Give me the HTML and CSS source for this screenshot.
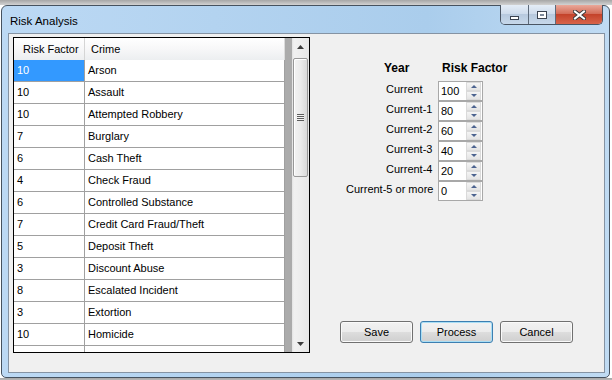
FILE: index.html
```html
<!DOCTYPE html>
<html lang="en">
<head>
	<meta charset="UTF-8">
	<title>Risk Analysis</title>
	<link rel="stylesheet" href="styles.css">
</head>
<body>
	<div class="window">
		<div class="titlebar">
			<span class="title">Risk Analysis</span>
			<div class="caps">
				<span class="cap min"><i></i></span>
				<span class="cap max"><i></i></span>
				<span class="cap close">
					<svg width="13" height="10" viewBox="0 0 13 10">
						<path d="M2 1.5 L11 8.5 M11 1.5 L2 8.5" stroke="#3b3b3b" stroke-width="4" stroke-linecap="square"/>
						<path d="M2 1.5 L11 8.5 M11 1.5 L2 8.5" stroke="#fff" stroke-width="2" stroke-linecap="square"/>
					</svg>
				</span>
			</div>
		</div>
		<div class="client">
			<div class="grid">
				<div class="grid-body">
					<div class="row head">
						<div class="cell c1">Risk Factor</div>
						<div class="cell c2">Crime</div>
					</div>
					<div class="row"><div class="cell c1 selected">10</div><div class="cell c2">Arson</div></div>
					<div class="row"><div class="cell c1">10</div><div class="cell c2">Assault</div></div>
					<div class="row"><div class="cell c1">10</div><div class="cell c2">Attempted Robbery</div></div>
					<div class="row"><div class="cell c1">7</div><div class="cell c2">Burglary</div></div>
					<div class="row"><div class="cell c1">6</div><div class="cell c2">Cash Theft</div></div>
					<div class="row"><div class="cell c1">4</div><div class="cell c2">Check Fraud</div></div>
					<div class="row"><div class="cell c1">6</div><div class="cell c2">Controlled Substance</div></div>
					<div class="row"><div class="cell c1">7</div><div class="cell c2">Credit Card Fraud/Theft</div></div>
					<div class="row"><div class="cell c1">5</div><div class="cell c2">Deposit Theft</div></div>
					<div class="row"><div class="cell c1">3</div><div class="cell c2">Discount Abuse</div></div>
					<div class="row"><div class="cell c1">8</div><div class="cell c2">Escalated Incident</div></div>
					<div class="row"><div class="cell c1">3</div><div class="cell c2">Extortion</div></div>
					<div class="row"><div class="cell c1">10</div><div class="cell c2">Homicide</div></div>
					<div class="row"><div class="cell c1"></div><div class="cell c2"></div></div>
				</div>
				<div class="vscroll">
					<div class="arrow">
						<svg width="7" height="4" viewBox="0 0 7 4"><path d="M0 4 L3.5 0 L7 4 Z" fill="#3c3c3c"/></svg>
					</div>
					<div class="track">
						<div class="thumb"><span class="grip"></span></div>
					</div>
					<div class="arrow">
						<svg width="7" height="4" viewBox="0 0 7 4"><path d="M0 0 L7 0 L3.5 4 Z" fill="#3c3c3c"/></svg>
					</div>
				</div>
			</div>
			<div class="side">
				<div class="years">
					<div class="hd hd-year">Year</div>
					<div class="hd hd-risk">Risk Factor</div>

					<div class="lbl">Current</div>
					<div class="num"><span>100</span><span class="spin"><b class="up"></b><b class="down"></b></span></div>
					<div class="lbl">Current-1</div>
					<div class="num"><span>80</span><span class="spin"><b class="up"></b><b class="down"></b></span></div>
					<div class="lbl">Current-2</div>
					<div class="num"><span>60</span><span class="spin"><b class="up"></b><b class="down"></b></span></div>
					<div class="lbl">Current-3</div>
					<div class="num"><span>40</span><span class="spin"><b class="up"></b><b class="down"></b></span></div>
					<div class="lbl">Current-4</div>
					<div class="num"><span>20</span><span class="spin"><b class="up"></b><b class="down"></b></span></div>
					<div class="lbl wide">Current-5 or more</div>
					<div class="num"><span>0</span><span class="spin"><b class="up"></b><b class="down"></b></span></div>
				</div>
				<div class="buttons">
					<button class="btn">Save</button>
					<button class="btn default">Process</button>
					<button class="btn">Cancel</button>
				</div>
			</div>
		</div>
	</div>
</body>
</html>
```

FILE: styles.css
```css
*{
	margin: 0;
	padding: 0;
	box-sizing: border-box;
}
body{
	background: linear-gradient(#a6a6a6, #d2d2d2 5px, #fff 5px);
	font: 11px "Liberation Sans", Arial, sans-serif;
	color: #000;
}
.window{
	margin: 5px 0 0 1px;
	width: 609px;
	height: 373px;
	border: 1px solid #46525f;
	border-radius: 6px 6px 5px 5px;
	background: linear-gradient(to right, #bcd9f4, #aacdec 70%, #c0dbf3);
	padding: 0 4px 4px 6px;
	display: flex;
	flex-direction: column;
}
.titlebar{
	height: 27px;
	display: flex;
	justify-content: space-between;
	align-items: flex-start;
}
.title{
	padding: 9px 0 0 2px;
	font-size: 11.5px;
}
/* caption buttons */
.caps{
	display: flex;
	margin: -1px 2px 0 0;
	height: 20px;
	border: 1px solid #4a5563;
	border-top: none;
	border-radius: 0 0 5px 5px;
	overflow: hidden;
}
.cap{
	display: flex;
	align-items: center;
	justify-content: center;
	height: 100%;
	background: linear-gradient(#e4edf7, #cfdcec 45%, #b7c9de 50%, #c7d8ea);
}
.cap + .cap{
	border-left: 1px solid #5d6a7a;
}
.min{
	width: 27px;
}
.max{
	width: 27px;
}
.close{
	width: 47px;
	background: linear-gradient(#e9a89a, #d46e5a 45%, #c4432b 50%, #d8644a);
}
.min i{
	display: block;
	width: 9px;
	height: 4px;
	margin-top: 6px;
	background: #fff;
	border: 1px solid #3b4350;
}
.max i{
	display: block;
	width: 10px;
	height: 8px;
	border: 1px solid #3b4350;
	box-shadow: inset 0 0 0 2px #fff;
	background: #7d8a9b;
}
.client{
	flex: 1;
	display: flex;
	padding: 3px 0 0 4px;
	border: 1px solid #8593a3;
	background: #f0f0f0;
}
/* data grid */
.grid{
	display: flex;
	width: 297px;
	height: 316px;
	border: 1px solid #000;
	background: #ababab;
}
.grid-body{
	width: 278px;
	overflow: hidden;
}
.row{
	display: flex;
	width: 271px;
	height: 22px;
	background: #fff;
}
.cell{
	height: 22px;
	line-height: 21px;
	padding-left: 3px;
	border-right: 1px solid #a0a0a0;
	border-bottom: 1px solid #a0a0a0;
	white-space: nowrap;
}
.c1{
	width: 71px;
}
.c2{
	width: 200px;
}
.head .cell{
	line-height: 22px;
	background: linear-gradient(#fff, #f7f7f8 50%, #eceef0);
	border-bottom: none;
	border-right: 1px solid #d5d5d5;
}
.head .c1{
	padding-left: 9px;
}
.head .c2{
	padding-left: 6px;
	border-right: 1px solid #dcdcdc;
}
.selected{
	background: #3399ff;
	color: #fff;
}
/* scrollbar */
.vscroll{
	width: 17px;
	display: flex;
	flex-direction: column;
	background: linear-gradient(to right, #e2e2e2, #f1f1f1 2px, #ececec 60%, #e6e6e6);
}
.arrow{
	height: 17px;
	display: flex;
	align-items: center;
	justify-content: center;
}
.track{
	flex: 1;
	padding-top: 3px;
}
.thumb{
	width: 15px;
	height: 119px;
	margin-left: 1px;
	border: 1px solid #989898;
	border-radius: 2px;
	background: linear-gradient(to right, #f3f3f3, #ebebeb 50%, #d9d9d9);
	box-shadow: inset 1px 1px 0 #fff;
	display: flex;
	align-items: center;
	justify-content: center;
}
.grip{
	display: block;
	width: 7px;
	height: 7px;
	background: repeating-linear-gradient(#5d5d5d 0, #5d5d5d 1px, #f4f4f4 1px, #f4f4f4 2px);
}
/* year table */
.side{
	flex: 1;
	display: flex;
	flex-direction: column;
	padding: 23px 0 29px 30px;
}
.years{
	display: grid;
	grid-template-columns: 98px 45px;
	grid-template-rows: 21px;
	grid-auto-rows: 20px;
}
.hd{
	font-weight: bold;
	font-size: 12px;
	line-height: 16px;
	white-space: nowrap;
}
.hd-year{
	padding-left: 44px;
}
.hd-risk{
	padding-left: 4px;
}
.lbl{
	padding: 1px 0 0 46px;
	line-height: 14px;
	white-space: nowrap;
}
.lbl.wide{
	padding-left: 6px;
}
.num{
	display: flex;
	justify-content: space-between;
	height: 20px;
	line-height: 18px;
	padding-left: 2px;
	border: 1px solid #a8a8a8;
	background: #fff;
}
.spin{
	display: flex;
	flex-direction: column;
	width: 15px;
	margin-right: 1px;
}
.spin b{
	flex: 1;
	display: flex;
	align-items: center;
	justify-content: center;
	border: 1px solid #dadada;
	background: linear-gradient(#f5f5f5, #e4e4e4);
}
.spin b::after{
	content: "";
	border-left: 3px solid transparent;
	border-right: 3px solid transparent;
}
.spin .up::after{
	border-bottom: 3px solid #4d6490;
}
.spin .down::after{
	border-top: 3px solid #4d6490;
}
/* buttons */
.buttons{
	margin-top: auto;
	display: flex;
	gap: 7px;
}
.btn{
	width: 73px;
	height: 22px;
	font: inherit;
	color: #000;
	border: 1px solid #707070;
	border-radius: 3px;
	background: linear-gradient(#f2f2f2, #ebebeb 50%, #dddddd 50%, #cfcfcf);
	box-shadow: inset 0 0 0 1px #fafafa;
}
.btn.default{
	border-color: #3c7fb1;
	box-shadow: inset 0 0 0 1px #a9def5;
}
```
